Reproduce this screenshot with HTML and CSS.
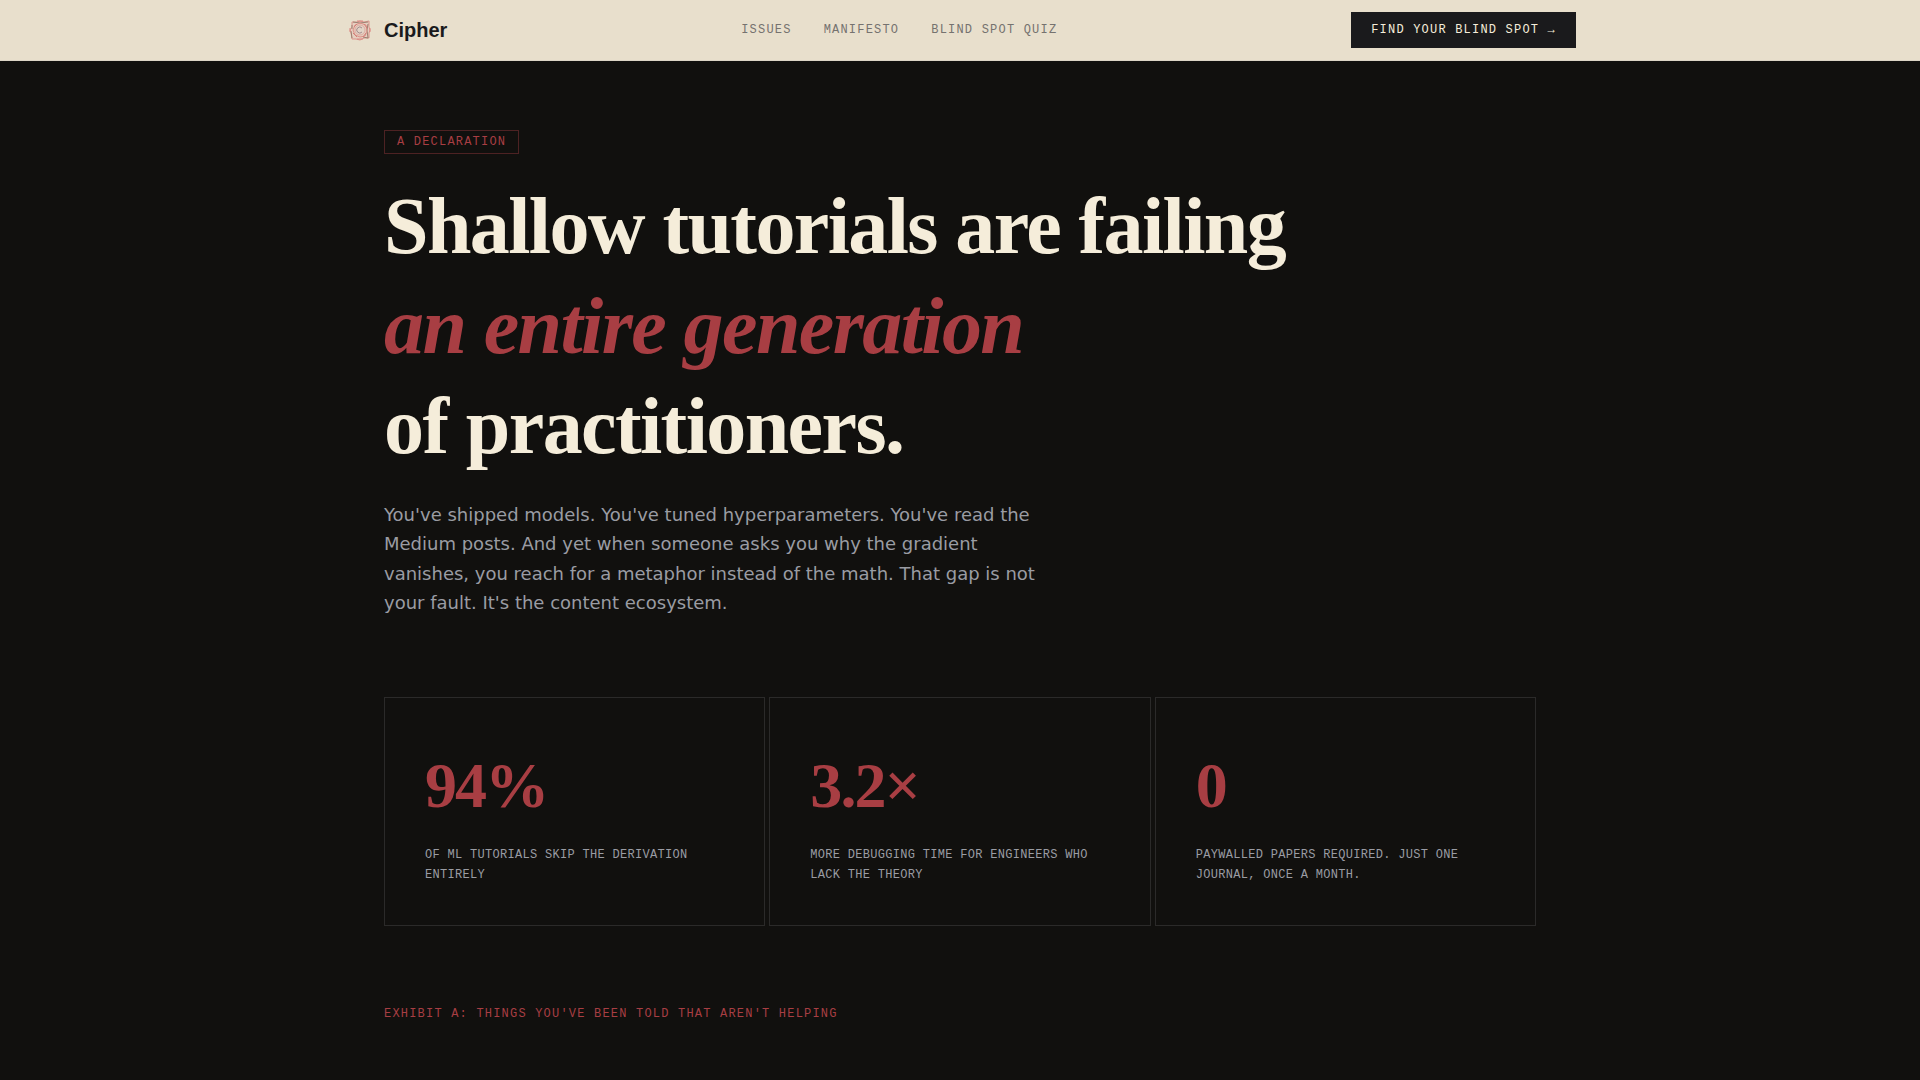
FILE: index.html
```html
<!DOCTYPE html>
<html lang="en">
<head>
    <meta charset="UTF-8">
    <meta name="viewport" content="width=device-width, initial-scale=1">
    <title>Cipher</title>
    <link rel="stylesheet" href="styles.css">
</head>
<body>
<header class="site-header">
    <div class="header-inner">
        <a class="brand" href="#">
            <svg class="brand-icon" viewBox="0 0 32 32" fill="none" aria-hidden="true">
                <path d="M8 8l5 0 3-1 4 1 5-1 0 6 1 3-1 3 0 5-5 0-4 2-4-1-4 0-1-6-1-3 2-3z" fill="#e6cfc0" stroke="#d9938b"/>
                <path d="M9 8l7 1 8-1M8 11v4M7 17l1 7M24 10l-1 6 1 8-5-1" stroke="#9c8172"/>
                <path d="M11 11l5-2 6 2 1 6-2 5-5 1-5-2-2-5z" stroke="#dc9088"/>
                <path d="M10 13l3-3M20 10l3 4M22 19l-3 4M13 23l-4-4" stroke="#d3807a"/>
                <path d="M13 7h6M13 25h6M26 14v4M6 14v4" stroke="#de8a84"/>
                <circle cx="16" cy="16" r="5" fill="#e2d3c6" stroke="#dfaca1"/>
                <path d="M18 14a3 3 0 1 0 0 4" stroke="#a58a8c"/>
            </svg>
            <span class="brand-name">Cipher</span>
        </a>
        <nav class="site-nav">
            <a href="#">Issues</a>
            <a href="#">Manifesto</a>
            <a href="#">Blind Spot Quiz</a>
        </nav>
        <a class="header-cta" href="#">Find your blind spot →</a>
    </div>
</header>

<main class="manifesto">
    <div class="tag">A declaration</div>
    <h1 class="title">
        Shallow tutorials are failing<br>
        <em>an entire generation</em><br>
        of practitioners.
    </h1>
    <p class="lead">
        You've shipped models. You've tuned hyperparameters. You've read the Medium posts.
        And yet when someone asks you why the gradient vanishes, you reach for a metaphor
        instead of the math. That gap is not your fault. It's the content ecosystem.
    </p>

    <div class="stats">
        <div class="stat">
            <div class="stat-value">94%</div>
            <div class="stat-label">of ML tutorials skip the derivation entirely</div>
        </div>
        <div class="stat">
            <div class="stat-value">3.2×</div>
            <div class="stat-label">more debugging time for engineers who lack the theory</div>
        </div>
        <div class="stat">
            <div class="stat-value">0</div>
            <div class="stat-label">paywalled papers required. Just one journal, once a month.</div>
        </div>
    </div>

    <h2 class="exhibit">Exhibit A: Things you've been told that aren't helping</h2>
</main>
</body>
</html>
```

FILE: styles.css
```css
:root {
    --paper: #e8dfcc;
    --cream: #f5edda;
    --ink: #1a1a1c;
    --dark: #11100e;
    --red: #a83e43;
    --muted: #9a9ca3;
    --mono: "Liberation Mono", monospace;
    --serif: "Liberation Serif", serif;
}

* {
    box-sizing: border-box;
}

body {
    margin: 0;
    background: var(--dark);
    color: var(--cream);
    font-family: "DejaVu Sans", sans-serif;
}

a {
    color: inherit;
    text-decoration: none;
}

/* header */
.site-header {
    background: var(--paper);
    border-bottom: 1px solid #dcd5c5;
}

.header-inner {
    display: flex;
    align-items: center;
    justify-content: space-between;
    max-width: 1280px;
    margin: 0 auto;
    padding: 12px 24px;
}

.brand {
    display: flex;
    align-items: center;
    gap: 8px;
}

.brand-icon {
    width: 32px;
    height: 32px;
}

.brand-name {
    color: var(--ink);
    font: bold 20px/28px "Liberation Sans", sans-serif;
}

.site-nav {
    display: flex;
    gap: 32px;
    color: #75726f;
}

.site-nav,
.header-cta,
.tag,
.exhibit {
    font: 12px/16px var(--mono);
    letter-spacing: 0.1em;
    text-transform: uppercase;
}

.header-cta {
    padding: 10px 20px;
    background: var(--ink);
    color: var(--cream);
}

/* manifesto */
.manifesto {
    max-width: 1280px;
    margin: 0 auto;
    padding: 69px 64px 48px;
}

.tag {
    width: fit-content;
    padding: 3px 12px;
    border: 1px solid rgba(168, 62, 67, 0.4);
    color: var(--red);
}

.title {
    margin: 22px 0 24px;
    font: bold 80px/100px var(--serif);
    letter-spacing: -0.02em;
}

.title em {
    color: var(--red);
}

.lead {
    max-width: 672px;
    margin: 0 0 80px;
    color: var(--muted);
    font-size: 18px;
    line-height: 1.625;
}

.stats {
    display: grid;
    grid-template-columns: repeat(3, 1fr);
    gap: 4px;
    margin-bottom: 80px;
}

.stat {
    padding: 40px;
    border: 1px solid #2b2a29;
}

.stat-value {
    margin-bottom: 11px;
    color: var(--red);
    font: bold 64px/96px var(--serif);
    letter-spacing: -0.03em;
}

.stat-label {
    color: var(--muted);
    font: 12px/20px var(--mono);
    letter-spacing: 0.025em;
    text-transform: uppercase;
}

.exhibit {
    margin: 0;
    color: var(--red);
}
```
